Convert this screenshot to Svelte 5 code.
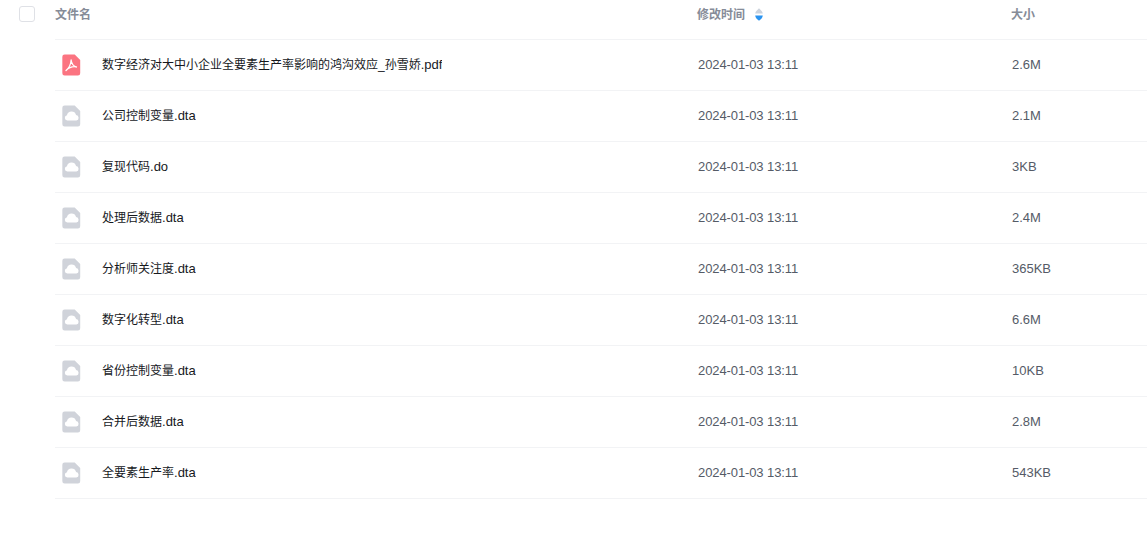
<script>
  const rows = [
    { name: '数字经济对大中小企业全要素生产率影响的鸿沟效应_孙雪娇', ext: '.pdf', size: '2.6M', type: 'pdf' },
    { name: '公司控制变量', ext: '.dta', size: '2.1M' },
    { name: '复现代码', ext: '.do', size: '3KB' },
    { name: '处理后数据', ext: '.dta', size: '2.4M' },
    { name: '分析师关注度', ext: '.dta', size: '365KB' },
    { name: '数字化转型', ext: '.dta', size: '6.6M' },
    { name: '省份控制变量', ext: '.dta', size: '10KB' },
    { name: '合并后数据', ext: '.dta', size: '2.8M' },
    { name: '全要素生产率', ext: '.dta', size: '543KB' }
  ];
</script>

<div class="list">
  <div class="check-col">
    <span class="checkbox"></span>
  </div>
  <div class="table">
    <div class="row head">
      <div class="name">文件名</div>
      <div class="time">
        修改时间
        <svg class="sort" width="8" height="13" viewBox="0 0 8 13">
          <path d="M4 0.3 C5.5 1.8 7.6 3.6 7.8 5.6 H0.2 C0.4 3.6 2.5 1.8 4 0.3 Z" fill="#ccd3dd" />
          <path d="M4 12.7 C5.5 11.6 7.6 9.8 7.8 7.4 H0.2 C0.4 9.8 2.5 11.6 4 12.7 Z" fill="#2b94f0" />
        </svg>
      </div>
      <div class="size">大小</div>
    </div>
    {#each rows as row}
      <div class="row">
        <div class="name">
          <svg class="file-icon" width="19" height="22" viewBox="0 0 20 24">
            {#if row.type === 'pdf'}
              <path d="M2.5 0.5 H13.5 L19.5 6.5 V21 a2.5 2.5 0 0 1 -2.5 2.5 H2.5 a2.5 2.5 0 0 1 -2.5 -2.5 V3 a2.5 2.5 0 0 1 2.5 -2.5 Z" fill="#fb7481" />
              <path d="M9.6 6.5 C9.4 10.5 7.5 15 4 18 M9.6 6.5 C10 10.5 12.5 13.5 16 14.2 C12.5 13.4 8 14 4 18" fill="none" stroke="#fff" stroke-width="1.4" stroke-linecap="round" />
            {:else}
              <path d="M2.5 0.5 H13.5 L19.5 6.5 V21 a2.5 2.5 0 0 1 -2.5 2.5 H2.5 a2.5 2.5 0 0 1 -2.5 -2.5 V3 a2.5 2.5 0 0 1 2.5 -2.5 Z" fill="#d0d3da" />
              <path d="M5.4 17 a3 3 0 0 1 -0.4 -5.9 a5.2 5.2 0 0 1 10 -0.2 a3.1 3.1 0 0 1 0.3 6.1 Z" fill="#fff" />
            {/if}
          </svg>
          <span class="title">{row.name}<span class="ext">{row.ext}</span></span>
        </div>
        <div class="time">2024-01-03 13:11</div>
        <div class="size">{row.size}</div>
      </div>
    {/each}
  </div>
</div>

<style>
  :global(body) {
    background: #fff;
    overflow: hidden;
  }

  .list {
    display: flex;
    font-family: "Liberation Sans", "Noto Sans CJK SC", sans-serif;
    font-size: 12px;
    line-height: 16px;
  }

  .check-col {
    width: 55px;
    flex: none;
    padding: 6px 0 0 19px;
    box-sizing: border-box;
  }

  .checkbox {
    display: block;
    width: 16px;
    height: 16px;
    box-sizing: border-box;
    border: 1px solid #dfe1e6;
    border-radius: 3px;
    background: #fff;
  }

  .table {
    flex: 1;
  }

  .row {
    display: grid;
    grid-template-columns: 642px 314px 1fr;
    align-items: center;
    height: 51px;
    border-bottom: 1px solid #f2f3f5;
    box-sizing: border-box;
  }

  .row.head {
    height: 40px;
    padding-bottom: 9px;
    font-weight: 700;
  }

  .name {
    display: flex;
    align-items: center;
    padding-left: 7px;
  }

  .head .name {
    padding-left: 0;
    color: #868c98;
  }

  .file-icon {
    flex: none;
    margin-right: 21px;
  }

  .title {
    color: #16181d;
    height: 16px;
    overflow: hidden;
  }

  .ext {
    font-size: 13px;
  }

  .time,
  .size {
    color: #555b67;
    font-size: 13px;
    padding-left: 1px;
  }

  .time {
    letter-spacing: -0.1px;
  }

  .head .time,
  .head .size {
    color: #868c98;
    font-size: 12px;
    letter-spacing: 0;
    display: flex;
    align-items: center;
    padding-left: 0;
  }

  .sort {
    margin-left: 10px;
    margin-top: -1px;
  }
</style>
